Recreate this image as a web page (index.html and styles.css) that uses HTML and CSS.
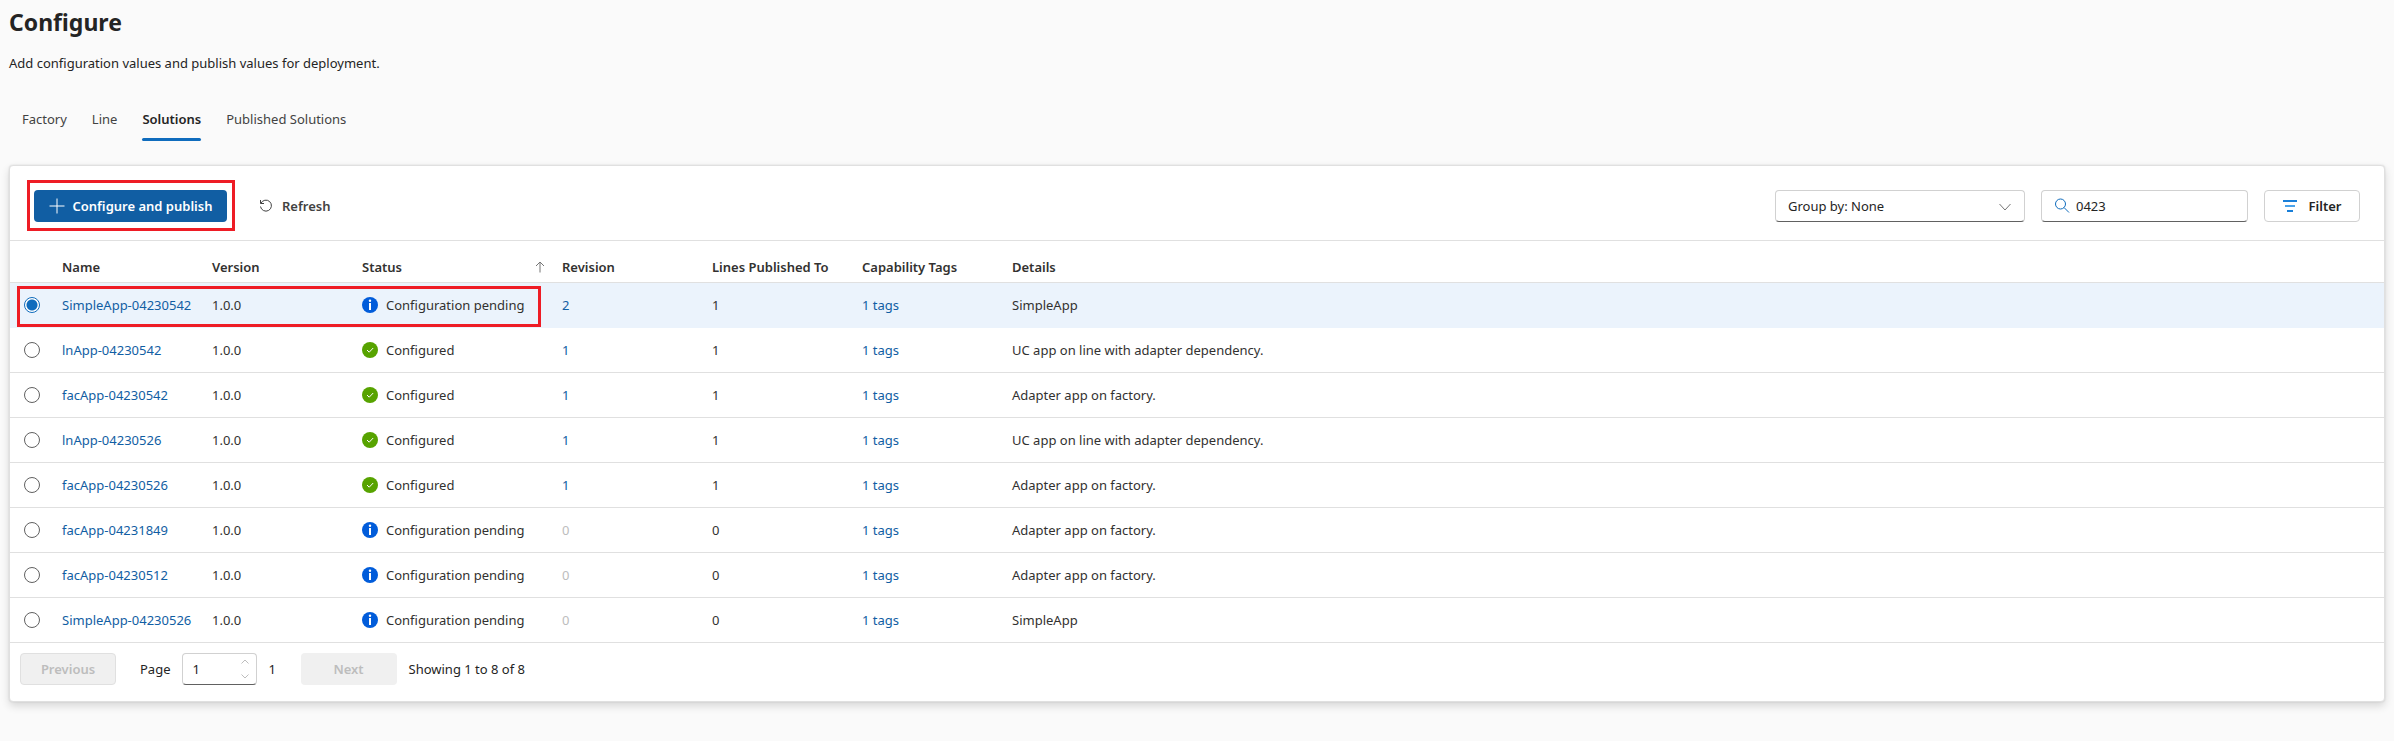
FILE: index.html
```html
<!DOCTYPE html>
<html lang="en">
<head>
<meta charset="utf-8">
<title>Configure</title>
<link rel="stylesheet" href="styles.css">
</head>
<body>
<main class="page">
  <h1 class="title">Configure</h1>
  <p class="subtitle">Add configuration values and publish values for deployment.</p>

  <nav class="tabs">
    <a class="tab" href="#factory">Factory</a>
    <a class="tab" href="#line">Line</a>
    <a class="tab tab-active" href="#solutions" aria-current="page">Solutions</a>
    <a class="tab" href="#published">Published Solutions</a>
  </nav>

  <section class="card">
    <div class="toolbar">
      <div class="callout">
        <button class="btn btn-primary" type="button">
          <svg class="icon-plus" viewBox="0 0 16 16" aria-hidden="true"><path d="M8 .5v15M.5 8h15"/></svg>
          Configure and publish
        </button>
      </div>
      <button class="btn btn-plain" type="button">
        <svg class="icon-refresh" viewBox="0 0 14 14" aria-hidden="true"><path d="M1.5 1v3.500H5M1.900 4.400A5.500 5.500 0 1 1 1.500 7.500"/></svg>
        Refresh
      </button>
      <div class="tools">
        <div class="select-box">
          <select class="field group" aria-label="Group by"><option>Group by: None</option></select>
          <svg class="icon-chevron" viewBox="0 0 12 8" aria-hidden="true"><path d="M.5 1 6 7l5.500-6"/></svg>
        </div>
        <label class="field search">
          <svg class="icon-search" viewBox="0 0 16 16" aria-hidden="true"><circle cx="6.500" cy="6" r="5"/><path d="m10 9.500 5 5"/></svg>
          <input class="search-input" type="text" value="0423" aria-label="Search">
        </label>
        <button class="btn btn-outline btn-filter" type="button">
          <svg class="icon-filter" viewBox="0 0 14 12" aria-hidden="true"><path class="f1" d="M0 1h14"/><path class="f2" d="M2 6h10"/><path class="f1" d="M4 11h6"/></svg>
          Filter
        </button>
      </div>
    </div>

    <table class="grid">
      <colgroup><col class="col-radio"><col class="col"><col class="col"><col class="col-status"><col class="col"><col class="col"><col class="col"><col></colgroup>
      <thead>
        <tr>
          <th></th><th>Name</th><th>Version</th>
          <th><div class="sorted">Status<svg class="icon-sort" viewBox="0 0 10 12" aria-hidden="true"><path d="M5 11.500V1M1 5l4-4 4 4"/></svg></div></th>
          <th>Revision</th><th>Lines Published To</th><th>Capability Tags</th><th>Details</th>
        </tr>
      </thead>
      <tbody id="rows"></tbody>
    </table>

    <div class="pager">
      <button class="btn btn-disabled btn-bordered" type="button" disabled>Previous</button>
      <label class="page-label" for="page">Page</label>
      <div class="spin-box">
        <input class="field spin" id="page" type="text" value="1">
        <svg class="icon-spin" viewBox="0 0 8 20" aria-hidden="true"><path d="M.5 4.500 4 1l3.500 3.500M.5 15.500 4 19l3.500-3.500"/></svg>
      </div>
      <span class="page-total">1</span>
      <button class="btn btn-disabled" type="button" disabled>Next</button>
      <span class="showing">Showing 1 to 8 of 8</span>
    </div>
  </section>
</main>
<script src="app.js"></script>
</body>
</html>
```
FILE: styles.css
```css
*, *::after { box-sizing: border-box; }
body {
  margin: 0;
  background: #fafafa;
  color: #242424;
  font: 13px/20px "Noto Sans", "Open Sans", sans-serif;
}
button, input, select { font: inherit; color: inherit; margin: 0; }
svg { flex: none; fill: none; stroke: currentColor; }
.page { padding: 7px 9px 40px; }
.title { margin: 0; font-size: 23px; line-height: 30px; font-weight: 700; }
.subtitle { margin: 16px 0 0; }
.tabs { display: flex; gap: 25px; margin: 30px 0 24px; padding-left: 13px; }
.tab {
  padding: 6px 0 9px;
  border-bottom: 3px solid transparent;
  color: #424242;
  text-decoration: none;
}
.tab-active { position: relative; color: #242424; font-weight: 600; }
.tab-active::after {
  content: "";
  position: absolute;
  left: 0; right: 0; bottom: -3px;
  height: 3px;
  border-radius: 2px;
  background: #0f6cbd;
}
.card {
  background: #fff;
  border: 1px solid #e0e0e0;
  border-radius: 4px;
  box-shadow: 0 4px 8px rgba(0, 0, 0, .14), 0 0 2px rgba(0, 0, 0, .12);
}
.toolbar {
  display: flex;
  align-items: center;
  padding: 14px 24px 9px 17px;
  border-bottom: 1px solid #e0e0e0;
}
.callout { border: 3px solid #ee1c25; padding: 7px 5px 6px 4px; }
.btn {
  display: inline-flex;
  align-items: center;
  justify-content: center;
  height: 32px;
  padding: 0 12px;
  border: 1px solid transparent;
  border-radius: 4px;
  background: none;
  font-weight: 600;
}
.btn-primary { width: 193px; gap: 8px; background: #115ea3; color: #fff; }
.btn-plain { gap: 9px; margin-left: 11px; color: #424242; }
.btn-outline { background: #fff; border-color: #d1d1d1; }
.btn-filter { width: 96px; gap: 12px; }
.tools { display: flex; gap: 16px; margin-left: auto; }
.field {
  height: 32px;
  border: 1px solid #d1d1d1;
  border-bottom-color: #616161;
  border-radius: 4px;
  background: #fff;
}
.select-box { position: relative; width: 250px; }
.group { width: 100%; padding: 0 12px; appearance: none; }
.icon-chevron { position: absolute; right: 14px; top: 13px; width: 12px; height: 8px; color: #757575; }
.search { display: flex; align-items: center; gap: 6px; width: 207px; padding: 0 12px; }
.search-input { flex: 1; min-width: 0; padding: 0; border: 0; outline: 0; background: none; }
.icon-plus { width: 16px; height: 16px; }
.icon-refresh { width: 14px; height: 14px; }
.icon-search { width: 16px; height: 16px; color: #0f6cbd; }
.icon-filter { width: 14px; height: 12px; stroke-width: 2; }
.f1 { stroke: #1a7fd8; }
.f2 { stroke: #4ba3ea; }
.grid { width: 100%; border-collapse: separate; border-spacing: 0; table-layout: fixed; color: #323130; }
.col-radio { width: 44px; }
.col { width: 150px; }
.col-status { width: 200px; }
.grid th, .grid td { padding: 0 8px; border-bottom: 1px solid #e0e0e0; text-align: left; white-space: nowrap; }
.grid th { height: 42px; padding-top: 10px; font-weight: 600; }
.grid td { height: 45px; }
.sorted { display: flex; align-items: center; justify-content: space-between; padding-right: 1px; }
.icon-sort { width: 10px; height: 12px; color: #757575; }
.selected td { background: #ebf3fc; border-color: #ebf3fc; }
.selected td:first-child { position: relative; z-index: 1; }
.selected td:first-child::after {
  content: "";
  position: absolute;
  left: 7px; top: 3px;
  width: 524px; height: 41px;
  border: 3px solid #ee1c25;
  pointer-events: none;
}
.radio {
  display: block;
  appearance: none;
  width: 16px; height: 16px;
  margin: 0 0 0 6px;
  border: 1px solid #616161;
  border-radius: 50%;
  background: #fff;
}
.radio:checked { border-color: #0f6cbd; background: radial-gradient(circle, #0f6cbd 5px, #fff 6px); }
.link { color: #115ea3; text-decoration: none; }
.muted { color: #bdbdbd; }
.status { display: flex; align-items: center; gap: 8px; }
.badge { width: 16px; height: 16px; stroke: none; }
.badge-info { fill: #015cda; }
.badge-ok { fill: #57a300; }
.badge-mark { fill: #fff; }
.badge-check { fill: none; stroke: #fff; }
.pager { display: flex; align-items: center; padding: 10px 10px 16px; }
.btn-disabled { width: 96px; background: #f0f0f0; color: #bdbdbd; }
.btn-bordered { border-color: #e0e0e0; }
.page-label { margin: 0 11px 0 24px; }
.spin-box { position: relative; width: 75px; }
.spin { display: block; width: 100%; padding: 0 10px; }
.icon-spin { position: absolute; right: 8px; top: 6px; width: 8px; height: 20px; color: #bdbdbd; }
.page-total { width: 44px; padding-left: 12px; }
.showing { margin-left: 12px; }
```
FILE: app.js
```js
const solutions = [
  ["SimpleApp-04230542", false, 2, 1, "SimpleApp"],
  ["lnApp-04230542", true, 1, 1, "UC app on line with adapter dependency."],
  ["facApp-04230542", true, 1, 1, "Adapter app on factory."],
  ["lnApp-04230526", true, 1, 1, "UC app on line with adapter dependency."],
  ["facApp-04230526", true, 1, 1, "Adapter app on factory."],
  ["facApp-04231849", false, 0, 0, "Adapter app on factory."],
  ["facApp-04230512", false, 0, 0, "Adapter app on factory."],
  ["SimpleApp-04230526", false, 0, 0, "SimpleApp"]
];
const info = '<svg class="badge badge-info" viewBox="0 0 16 16" aria-hidden="true"><circle cx="8" cy="8" r="8"/><path class="badge-mark" d="M7 6h2v7H7z"/><circle class="badge-mark" cx="8" cy="3.700" r="1.200"/></svg>';
const ok = '<svg class="badge badge-ok" viewBox="0 0 16 16" aria-hidden="true"><circle cx="8" cy="8" r="8"/><path class="badge-check" d="m5 8 2.200 2.200L11.200 6"/></svg>';
document.getElementById("rows").innerHTML = solutions.map(([name, done, revision, lines, details], i) => `
  <tr${i === 0 ? ' class="selected"' : ""}>
    <td><input class="radio" type="radio" name="solution" aria-label="${name}"${i === 0 ? " checked" : ""}></td>
    <td><a class="link" href="#${name}">${name}</a></td>
    <td>1.0.0</td>
    <td><div class="status">${done ? ok : info}<span>${done ? "Configured" : "Configuration pending"}</span></div></td>
    <td>${revision ? `<a class="link" href="#revision">${revision}</a>` : '<span class="muted">0</span>'}</td>
    <td>${lines}</td>
    <td><a class="link" href="#tags">1 tags</a></td>
    <td>${details}</td>
  </tr>`).join("");
```
